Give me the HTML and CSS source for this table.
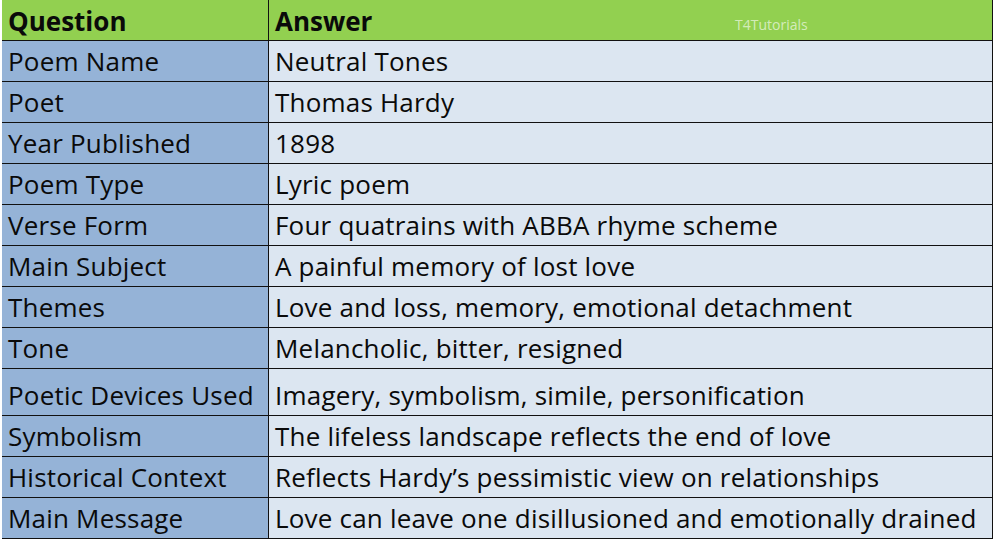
FILE: index.html
```html
<!DOCTYPE html>
<html>
<head>
<meta charset="utf-8">
<link rel="stylesheet" href="styles.css">
</head>
<body>
<div class="sheet">
  <div class="cell head q">Question</div>
  <div class="cell head a">Answer<span class="mark">T4Tutorials</span></div>

  <div class="cell q">Poem Name</div><div class="cell a">Neutral Tones</div>
  <div class="cell q">Poet</div><div class="cell a">Thomas Hardy</div>
  <div class="cell q">Year Published</div><div class="cell a">1898</div>
  <div class="cell q">Poem Type</div><div class="cell a">Lyric poem</div>
  <div class="cell q">Verse Form</div><div class="cell a">Four quatrains with ABBA rhyme scheme</div>
  <div class="cell q">Main Subject</div><div class="cell a">A painful memory of lost love</div>
  <div class="cell q">Themes</div><div class="cell a">Love and loss, memory, emotional detachment</div>
  <div class="cell q">Tone</div><div class="cell a">Melancholic, bitter, resigned</div>
  <div class="cell q tall">Poetic Devices Used</div><div class="cell a tall">Imagery, symbolism, simile, personification</div>
  <div class="cell q">Symbolism</div><div class="cell a">The lifeless landscape reflects the end of love</div>
  <div class="cell q">Historical Context</div><div class="cell a">Reflects Hardy’s pessimistic view on relationships</div>
  <div class="cell q">Main Message</div><div class="cell a">Love can leave one disillusioned and emotionally drained</div>
</div>
</body>
</html>
```
FILE: styles.css
```css
html, body {
  margin: 0;
  padding: 0;
  background: #ffffff;
  overflow: hidden;
}
body {
  padding-left: 2px;
  font-family: "Open Sans", Lato, sans-serif;
}
.sheet {
  display: grid;
  grid-template-columns: 267px 724px;
  width: 991px;
}
.cell {
  box-sizing: border-box;
  height: 41px;
  display: flex;
  align-items: flex-end;
  padding: 0 0 5px 6px;
  border-bottom: 1px solid #111;
  font-size: 26px;
  line-height: 30px;
  color: #0a0a0a;
  white-space: nowrap;
  letter-spacing: 0.2px;
}
.q {
  background: #95b3d7;
  border-right: 1px solid #111;
}
.a {
  background: #dce6f1;
  border-right: 1px solid #111;
  padding-left: 6px;
}
.head {
  background: #92d050;
  font-weight: 700;
  letter-spacing: 0;
  padding-bottom: 4px;
}
.head.a {
  position: relative;
}
.tall {
  height: 47px;
}
.mark {
  position: absolute;
  left: 466px;
  top: 17px;
  font-size: 14px;
  line-height: 16px;
  font-weight: 400;
  letter-spacing: 0;
  color: rgba(255, 255, 255, 0.62);
}
```
